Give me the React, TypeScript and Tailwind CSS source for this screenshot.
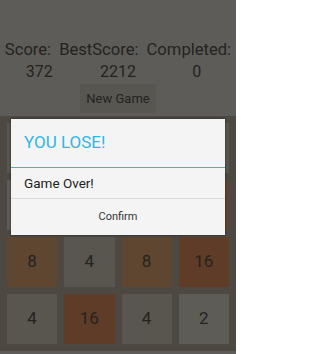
import React from "react";

const tiles = [
  { v: "4", c: "bg-[#58564e]" },
  { v: "8", c: "bg-[#5f4630]" },
  { v: "4", c: "bg-[#58564e]" },
  { v: "4", c: "bg-[#58564e]" },
  { v: "2", c: "bg-[#5e5c57]" },
  { v: "4", c: "bg-[#58564e]" },
  { v: "2", c: "bg-[#5e5c57]" },
  { v: "8", c: "bg-[#5f4630]" },
  { v: "8", c: "bg-[#5f4630]" },
  { v: "4", c: "bg-[#58564e]" },
  { v: "8", c: "bg-[#5f4630]" },
  { v: "16", c: "bg-[#5f3c27]" },
  { v: "4", c: "bg-[#58564e]" },
  { v: "16", c: "bg-[#5f3c27]" },
  { v: "4", c: "bg-[#58564e]" },
  { v: "2", c: "bg-[#5e5c57]" },
];

const App = () => {
  return (
    <div
      className="relative w-[236px] h-[354px] overflow-hidden bg-[#5e5c58] text-[#24231f]"
      style={{ fontFamily: "Roboto, 'Noto Sans', sans-serif" }}
    >
      {/* Scores */}
      <div className="pt-[40px]">
        <div className="flex justify-center gap-[8px] text-[16.6px] leading-[20px]">
          <span>Score:</span>
          <span>BestScore:</span>
          <span>Completed:</span>
        </div>
        <div className="grid grid-cols-3 text-center text-[16px] leading-[20px] mt-[2px]">
          <span>372</span>
          <span>2212</span>
          <span>0</span>
        </div>
        <div className="flex justify-center mt-[2px]">
          <div className="w-[76px] h-[29px] bg-[#585651] flex items-center justify-center text-[13px]">
            New Game
          </div>
        </div>
      </div>

      {/* Board */}
      <div className="mt-[3px] bg-[#4d4842] px-[7px] pt-[7px] pb-[7px] grid grid-cols-4 gap-[7px]">
        {tiles.map((t, i) => (
          <div
            key={i}
            className={`h-[50px] flex items-center justify-center text-[17px] ${t.c}`}
          >
            {t.v}
          </div>
        ))}
      </div>

      {/* Dialog */}
      <div className="absolute left-[11px] top-[119px] w-[214px] bg-[#f4f4f4] shadow-[0_0_2px_rgba(0,0,0,0.6)]">
        <div className="h-[48px] flex items-center px-[13px] text-[#33b5e5] text-[17px]">
          YOU LOSE!
        </div>
        <div className="h-[1px] bg-[#33b5e5]" />
        <div className="h-[30px] flex items-center px-[13px] text-[13.5px] text-[#222]">
          Game Over!
        </div>
        <div className="h-[1px] bg-[#dcdcdc]" />
        <div className="h-[36px] flex items-center justify-center text-[11px] text-[#333]">
          Confirm
        </div>
      </div>
    </div>
  );
};

export default App;
